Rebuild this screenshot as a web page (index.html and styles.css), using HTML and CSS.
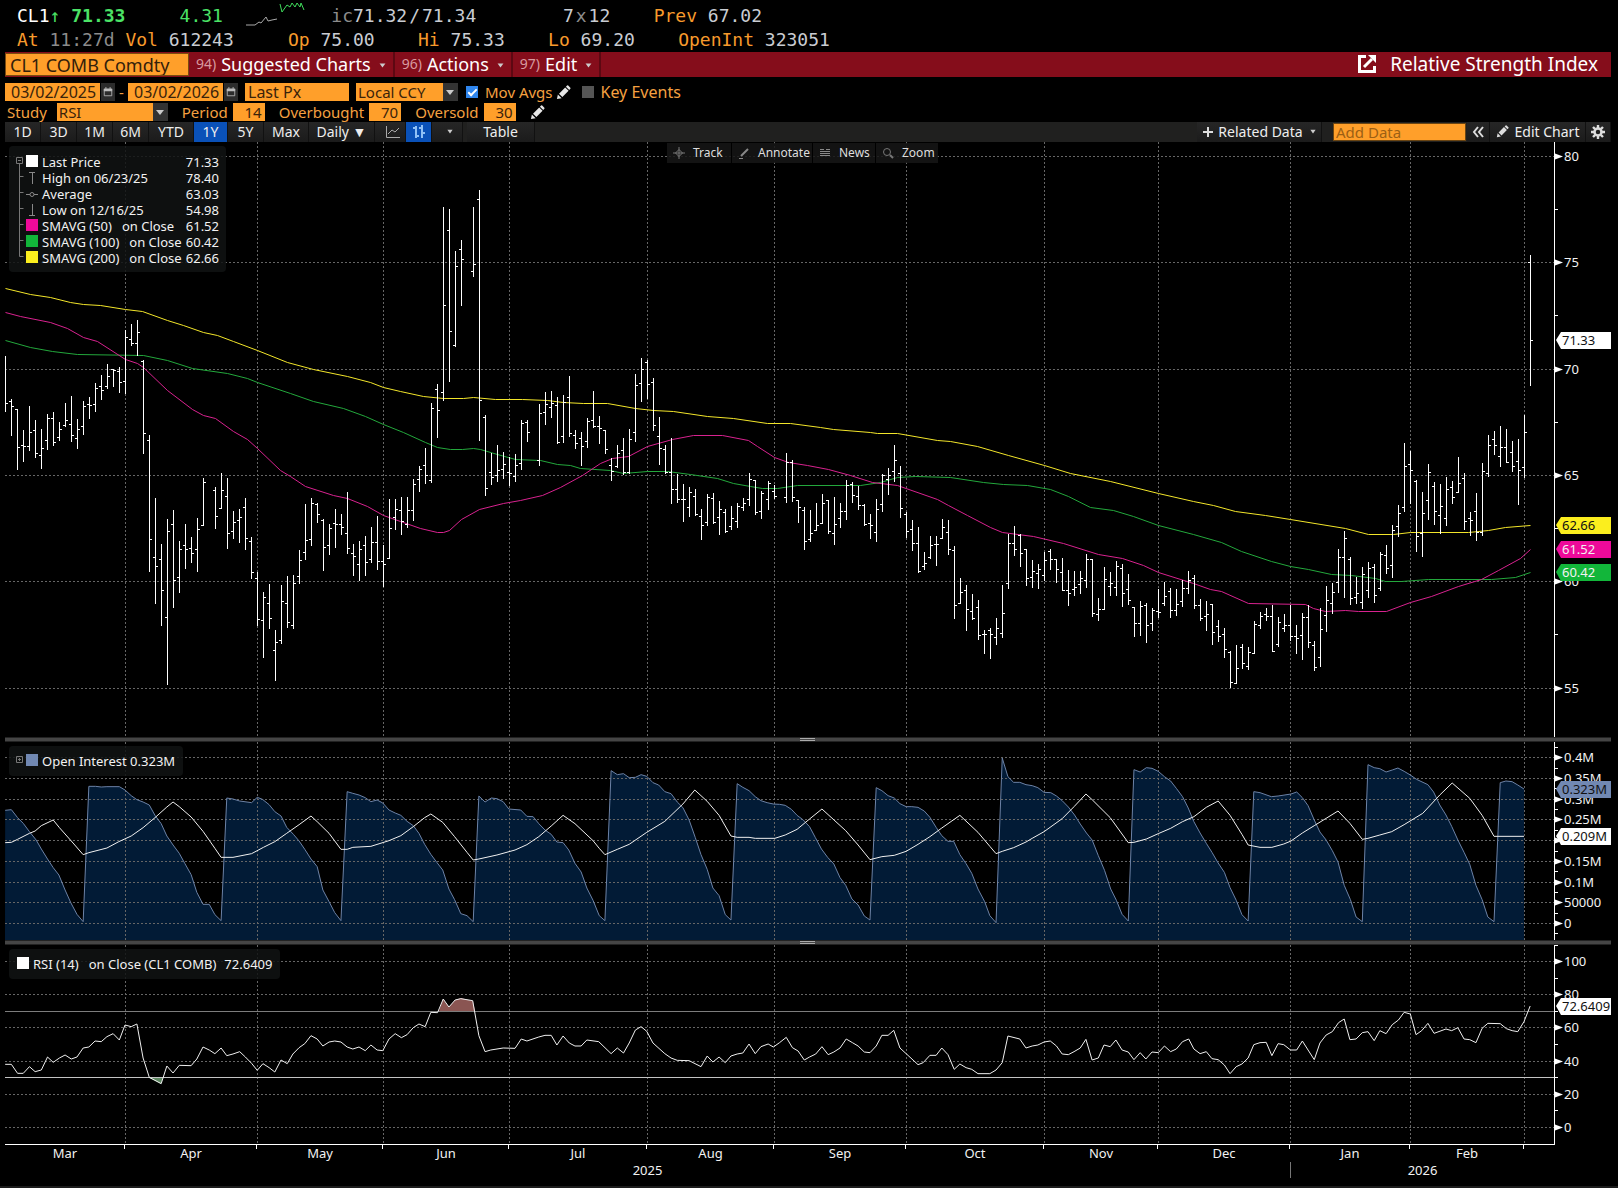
FILE: index.html
```html
<!DOCTYPE html>
<html lang="en">
<head>
<meta charset="utf-8">
<title>CL1 COMB Comdty - Relative Strength Index</title>
<link rel="stylesheet" href="styles.css">
</head>
<body>
<svg class="defs" aria-hidden="true">
  <symbol id="pencil" viewBox="0 0 16 16"><path fill="currentColor" d="M1 15l1-5 4 4zM3.200 9.200l6.600-6.600 3.600 3.600-6.600 6.600zM10.600 1.800l1.200-1.200q.6-.5 1.200 0l2.300 2.300q.5.600 0 1.200l-1.200 1.200z"/></symbol>
  <symbol id="calendar" viewBox="0 0 12 12"><path fill="none" stroke="currentColor" d="M1.500 2.500h9v8h-9z"/><path fill="currentColor" d="M1 2h10v3H1zM3 0h1v3H3zM8 0h1v3H8z"/></symbol>
  <symbol id="caret" viewBox="0 0 8 6"><path fill="currentColor" d="M.5.500h7L4 5.500z"/></symbol>
</svg>

<header class="quote">
  <div class="quote-line"><span class="white">CL1</span><span class="up">↑ <b>71.33</b>     4.31</span>  <svg class="spark" viewBox="0 0 65 28"><path stroke="#aaa" d="M1 25h9l4-3 2 1 5-6 2 4 4-1 5-1"/><path stroke="#3fdc5c" d="M35 4l2 8 5-7 3 2 2-4 3 4 2-4 3 4 1-4 3 7"/></svg>  <span class="dim">ic</span>71.32<span class="slash">/</span>71.34        7<span class="dim slash">x</span>12    <span class="amber">Prev</span> 67.02</div>
  <div class="quote-line"><span class="amber">At</span> <span class="dim">11:27d</span> <span class="amber">Vol</span> 612243     <span class="amber">Op</span> 75.00    <span class="amber">Hi</span> 75.33    <span class="amber">Lo</span> 69.20    <span class="amber">OpenInt</span> 323051</div>
</header>

<nav class="menubar">
  <input class="ticker" type="text" value="CL1 COMB Comdty" aria-label="Security">
  <button class="menu" type="button"><span class="num">94)</span>Suggested Charts<svg class="caret"><use href="#caret"/></svg></button>
  <button class="menu" type="button"><span class="num">96)</span>Actions<svg class="caret"><use href="#caret"/></svg></button>
  <button class="menu" type="button"><span class="num">97)</span>Edit<svg class="caret"><use href="#caret"/></svg></button>
  <h1 class="title"><svg class="popout" viewBox="0 0 18 18"><path fill="none" stroke="#fff" stroke-width="3" d="M8 1.500H1.500v15h15V11M6 12l8-8"/><path fill="#fff" d="M10 0h8v8z"/></svg>Relative Strength Index</h1>
</nav>

<form class="params">
  <div class="param-row">
    <input class="field date" type="text" value="03/02/2025" aria-label="From">
    <button class="icon-btn" type="button" aria-label="Pick start date"><svg><use href="#calendar"/></svg></button>
    <span class="dash">-</span>
    <input class="field date" type="text" value="03/02/2026" aria-label="To">
    <button class="icon-btn" type="button" aria-label="Pick end date"><svg><use href="#calendar"/></svg></button>
    <input class="field price" type="text" value="Last Px" aria-label="Price type">
    <span class="select ccy"><select aria-label="Currency"><option>Local CCY</option></select></span>
    <input id="movavg" class="check" type="checkbox" checked><label class="check-label" for="movavg">Mov Avgs</label>
    <svg class="pencil"><use href="#pencil"/></svg>
    <input id="keyev" class="check gap" type="checkbox"><label class="check-label key" for="keyev">Key Events</label>
  </div>
  <div class="param-row">
    <label class="study-label" for="study">Study</label>
    <span class="select study"><select id="study"><option>RSI</option></select></span>
    <label class="num-label" for="period">Period</label><input id="period" class="field small" type="text" value="14">
    <label class="num-label" for="overb">Overbought</label><input id="overb" class="field small" type="text" value="70">
    <label class="num-label" for="overs">Oversold</label><input id="overs" class="field small" type="text" value="30">
    <svg class="pencil second"><use href="#pencil"/></svg>
  </div>
</form>

<div class="toolbar">
  <div class="ranges">
    <button class="r36" type="button">1D</button><button class="r36" type="button">3D</button><button class="r36" type="button">1M</button><button class="r36" type="button">6M</button><button class="r45" type="button">YTD</button><button class="r34 on" type="button">1Y</button><button class="r36" type="button">5Y</button><button class="r45" type="button">Max</button>
  </div>
  <button class="daily" type="button">Daily ▼</button>
  <button class="line-type" type="button" aria-label="Line chart"><svg viewBox="0 0 16 14"><path fill="none" stroke="#aaa" d="M1.500 1v11.500H15M3 9l4-4 3 2 4-4"/></svg></button>
  <button class="bar-type on" type="button" aria-label="Bar chart"><svg viewBox="0 0 14 16"><path fill="none" stroke="#8fc0f5" stroke-width="2" d="M4 2v12M1 4h3M4 12h3M10 1v13M7 4h3M10 9h3"/></svg></button>
  <button class="more" type="button" aria-label="More chart types"><svg class="caret"><use href="#caret"/></svg></button>
  <button class="table-btn" type="button">Table</button>
  <span class="grow"></span>
  <button class="related" type="button"><svg class="plus" viewBox="0 0 12 12"><path stroke="#ddd" stroke-width="2" d="M6 1v10M1 6h10"/></svg>Related Data<svg class="caret"><use href="#caret"/></svg></button>
  <input class="add-data" type="text" placeholder="Add Data" aria-label="Add Data">
  <button class="collapse" type="button" aria-label="Collapse"><svg viewBox="0 0 12 12"><path fill="none" stroke="#ddd" stroke-width="2" d="M6 1L2 6l4 5M11 1L7 6l4 5"/></svg></button>
  <button class="edit" type="button"><svg class="pencil-s"><use href="#pencil"/></svg>Edit Chart</button>
  <button class="gear" type="button" aria-label="Settings"><svg viewBox="0 0 14 14"><circle cx="7" cy="7" r="3.500" fill="none" stroke="#ddd" stroke-width="2.500"/><path stroke="#ddd" stroke-width="2.400" d="M7 0v3M7 11v3M0 7h3M11 7h3M2 2l2.200 2.200M9.800 9.800L12 12M12 2L9.800 4.200M4.200 9.800L2 12"/></svg></button>
</div>

<main class="chart">
  <section class="panel price-panel">
    <svg class="plot" id="price-plot" viewBox="5 142 1549 595" preserveAspectRatio="none"></svg>
    <svg class="axis" id="price-axis" viewBox="1554 142 57 595"></svg>
    <div class="legend">
      <svg class="tree tall" viewBox="0 0 10 112"><path fill="none" stroke="#777" d="M.5 3.500h6v6h-6zM2 6.500h3M3.500 10v92.500M3.500 22.500h4M3.500 38.500h4M3.500 54.500h4M3.500 70.500h4M3.500 86.500h4M3.500 102.500h4"/></svg>
      <ul class="series">
        <li><i class="swatch white-bg"></i><span>Last Price</span><b>71.33</b></li>
        <li><svg class="mark" viewBox="0 0 12 12"><path stroke="#888" d="M3 .5h6M6.500 0v12"/></svg><span>High on 06/23/25</span><b>78.40</b></li>
        <li><svg class="mark" viewBox="0 0 12 12"><path stroke="#888" d="M0 6.500h12"/><circle cx="6" cy="6.500" r="2" fill="#111" stroke="#888"/></svg><span>Average</span><b>63.03</b></li>
        <li><svg class="mark" viewBox="0 0 12 12"><path stroke="#888" d="M3 11.500h6M6.500 0v12"/></svg><span>Low on 12/16/25</span><b>54.98</b></li>
        <li><i class="swatch pink-bg"></i><span>SMAVG (50)</span><span class="on-close">on Close</span><b>61.52</b></li>
        <li><i class="swatch green-bg"></i><span>SMAVG (100)</span><span class="on-close">on Close</span><b>60.42</b></li>
        <li><i class="swatch yellow-bg"></i><span>SMAVG (200)</span><span class="on-close">on Close</span><b>62.66</b></li>
      </ul>
    </div>
    <div class="tools">
      <button class="t64" type="button"><svg viewBox="0 0 12 12"><path fill="none" stroke="#777" d="M6 0v12M0 6h12M6 2.500L9.500 6 6 9.500 2.500 6z"/></svg>Track</button>
      <button class="t80" type="button"><svg viewBox="0 0 12 12"><path stroke="#888" stroke-width="2" d="M3 9l7-7"/><path stroke="#888" d="M1 11.500h4"/></svg>Annotate</button>
      <button class="t62" type="button"><svg viewBox="0 0 12 12"><path stroke="#888" d="M1 2.500h4M7 2.500h4M1 4.500h10M1 6.500h10M1 8.500h10"/></svg>News</button>
      <button class="t62" type="button"><svg viewBox="0 0 12 12"><circle cx="5" cy="5" r="3.500" fill="none" stroke="#777"/><path stroke="#777" stroke-width="2" d="M8 8l3 3"/></svg>Zoom</button>
    </div>
  </section>
  <div class="splitter"></div>
  <section class="panel oi-panel">
    <svg class="plot" id="oi-plot" viewBox="5 742 1549 198" preserveAspectRatio="none"></svg>
    <svg class="axis" id="oi-axis" viewBox="1554 742 57 198"></svg>
    <div class="legend one">
      <svg class="tree" viewBox="0 0 10 16"><path fill="none" stroke="#777" d="M.5 3.500h6v6h-6zM2 6.500h3M3.500 5v3"/></svg>
      <i class="swatch blue-bg"></i><span>Open Interest 0.323M</span>
    </div>
  </section>
  <div class="splitter"></div>
  <section class="panel rsi-panel">
    <svg class="plot" id="rsi-plot" viewBox="5 945 1549 200" preserveAspectRatio="none"></svg>
    <svg class="axis" id="rsi-axis" viewBox="1554 945 57 200"></svg>
    <div class="legend one">
      <i class="swatch white-bg"></i><span>RSI (14)</span><span class="on-close">on Close (CL1 COMB)</span><span class="reading">72.6409</span>
    </div>
  </section>
  <div class="months">
    <span>Mar</span><span>Apr</span><span>May</span><span>Jun</span><span>Jul</span><span>Aug</span><span>Sep</span><span>Oct</span><span>Nov</span><span>Dec</span><span>Jan</span><span>Feb</span><span></span>
  </div>
  <div class="years"><span>2025</span><span>2026</span></div>
</main>
<footer class="edge"></footer>
<script src="chart.js"></script>
</body>
</html>
```

FILE: styles.css
```css
* { box-sizing: border-box; }
body { margin: 0; background: #000; color: #f2f2f2; font-family: "Noto Sans", "Open Sans", sans-serif; font-size: 13px; line-height: 16px; }
button, input, select { font: inherit; color: inherit; margin: 0; padding: 0; border: 0; border-radius: 0; background: none; }
button { display: flex; align-items: center; justify-content: center; white-space: nowrap; }
svg { display: block; flex: none; }
.defs { position: absolute; width: 0; height: 0; }
.caret { width: 7px; height: 5px; color: #ccc; }

/* quote header */
.quote { height: 52px; padding: 4px 0 0 17px; overflow: hidden; font-family: "DejaVu Sans Mono", monospace; font-size: 18px; line-height: 24px; color: #c9ccd2; }
.quote-line { white-space: pre; height: 24px; }
.white { color: #fff; }
.up { color: #4be366; }
.dim { color: #8c8c8c; }
.amber { color: #f79a2c; }
.slash { margin: 0 2px; }
.spark { display: inline-block; width: 65px; height: 28px; margin-top: -4px; vertical-align: top; fill: none; }

/* red menu bar */
.menubar { display: flex; align-items: stretch; height: 25px; margin: 0 7px 0 5px; background: #850d1b; gap: 1px; }
.ticker { width: 184px; height: 23px; margin-top: 1px; padding-left: 4px; background: #ff9f2a; border: 1px solid #7a4a10; color: #33200a; font-size: 18px; line-height: 22px; }
.menu { padding: 0 7px 2px 6px; border-right: 2px solid #5c0812; color: #fff; font-size: 18px; line-height: 22px; }
.menu .caret { margin: 4px 0 0 8px; }
.num { margin-right: 5px; color: #d89aa0; font-family: "Liberation Sans Narrow", "Noto Sans", sans-serif; font-size: 14px; }
.title { display: flex; align-items: center; gap: 14px; margin: 0 13px 2px auto; font-size: 19px; font-weight: 400; line-height: 22px; color: #fff; }
.popout { width: 18px; height: 18px; }

/* parameters */
.params { display: flex; flex-direction: column; gap: 2px; padding: 6px 7px 1px 5px; color: #f5a040; font-size: 15px; }
.param-row { display: flex; align-items: center; height: 18px; line-height: 18px; }
.field, .select select { height: 18px; background: #ff9f2a; color: #3a230a; line-height: 18px; }
.field { padding: 0 3px; }
.date { width: 95px; padding-left: 6px; font-size: 16px; }
.icon-btn { width: 14px; height: 18px; margin-left: 1px; background: #2c2c2c; color: #bbb; }
.icon-btn svg { width: 10px; height: 12px; }
.dash { width: 13px; text-align: center; }
.price { width: 104px; margin-left: 7px; font-size: 16px; }
.select { position: relative; display: flex; margin-left: 7px; }
.select select { appearance: none; width: 102px; border-right: 15px solid #333; padding-left: 2px; }
.select::after { content: ""; position: absolute; right: 4px; top: 7px; border: 4px solid transparent; border-top: 5px solid #ccc; border-bottom: 0; pointer-events: none; }
.select.study { margin-left: 10px; }
.select.study select { width: 111px; }
.check { appearance: none; width: 12px; height: 12px; margin-left: 8px; background: #555; }
.check:checked { background: #2f86ee; }
.check:checked::after { content: ""; display: block; width: 7px; height: 3px; margin: 3px 0 0 2px; border: solid #fff; border-width: 0 0 2px 2px; rotate: -45deg; }
.gap { margin-left: 11px; }
.check-label { margin-left: 7px; }
.key { font-size: 16px; }
.pencil { width: 15px; height: 15px; margin-left: 3px; color: #e6e6e6; }
.second { margin-left: 14px; }
.study-label { margin-left: 2px; }
.num-label { margin-left: 14px; }
.small { width: 32px; margin-left: 5px; text-align: right; }

/* toolbar */
.toolbar { display: flex; height: 20px; margin: 0 7px 0 5px; background: #20201f; font-size: 14px; line-height: 18px; color: #eee; }
.toolbar button { border-right: 1px solid #111; padding-bottom: 1px; background: linear-gradient(#262626, #1b1b1b); }
.toolbar .on { background: #0a51b8; }
.ranges { display: flex; }
.r34 { width: 34px; }
.r36 { width: 36px; }
.r45 { width: 45px; }
.daily { width: 66px; }
.line-type { width: 31px; }
.line-type svg { width: 16px; height: 14px; margin-left: 6px; }
.bar-type { width: 26px; }
.bar-type svg { width: 14px; height: 16px; }
.more { width: 31px; margin-right: 4px; padding-left: 6px; }
.more .caret, .related .caret { width: 6px; height: 5px; }
.table-btn { width: 68px; }
.grow { flex: 1; }
.related { width: 125px; }
.plus { width: 12px; height: 12px; margin-right: 4px; }
.related .caret { margin-left: 7px; }
.add-data { width: 133px; height: 18px; margin: 1px 1px 0 11px; padding-left: 2px; background: #ff9f2a; border: 1px solid #6b4512; color: #33200a; font-size: 15px; }
.add-data::placeholder { color: #9c5f14; opacity: 1; }
.collapse { width: 23px; }
.collapse svg { width: 12px; height: 12px; }
.edit { width: 96px; }
.pencil-s { width: 13px; height: 13px; margin-right: 6px; color: #ddd; }
.gear { width: 25px; }
.gear svg { width: 14px; height: 14px; }

/* chart panels */
.chart { margin: 0 7px 0 5px; }
.panel { position: relative; display: grid; grid-template-columns: 1fr 57px; }
.plot { width: 100%; height: 100%; overflow: hidden; }
.axis { width: 57px; height: 100%; overflow: visible; }
.price-panel { height: 595px; }
.oi-panel { height: 198px; }
.rsi-panel { height: 200px; }
.plot path { fill: none; stroke-width: 1; }
.grid { stroke: #666; stroke-dasharray: 2 2; shape-rendering: crispEdges; }
.bars { stroke: #fff; shape-rendering: crispEdges; }
.sma200 { stroke: #f3e62a; }
.sma100 { stroke: #23a83c; }
.sma50 { stroke: #d8228f; }
.plot .area { fill: #021b36; stroke: none; }
.area-line { stroke: #6c82a6; }
.white-line { stroke: #f0f0f0; }
.plot .hot { fill: #8a5552; stroke: none; }
.plot .cold { fill: #5c8560; stroke: none; }
.band-top { stroke: #7c7c7c; shape-rendering: crispEdges; }
.band-low { stroke: #c4c4c4; shape-rendering: crispEdges; }
.axis-line { stroke: #fff; shape-rendering: crispEdges; }
.axis text { fill: #f2f2f2; font-size: 13px; }
.axis .dark { fill: #111; }
.splitter { height: 5px; background: linear-gradient(90deg, transparent calc(50% - 8px), #aaa 0, #aaa calc(50% + 7px), transparent 0) 0 0 / 100% 1px no-repeat, linear-gradient(90deg, transparent calc(50% - 8px), #aaa 0, #aaa calc(50% + 7px), transparent 0) 0 2px / 100% 1px no-repeat, #454545; border: solid #222; border-width: 1px 0; }

.legend { position: absolute; left: 4px; top: 4px; display: flex; padding: 8px 7px 6px; border-radius: 4px; background: rgba(17, 19, 19, .85); white-space: nowrap; }
.tree { width: 10px; height: 16px; }
.tall { height: 112px; }
.series { width: 193px; margin: 0; padding: 0; list-style: none; }
.series li { display: flex; height: 16px; }
.series b { margin-left: auto; font-weight: 400; }
.on-close { margin-left: 10px; }
.reading { margin-left: 8px; }
.swatch { width: 12px; height: 12px; margin: 1px 4px 0 0; }
.mark { width: 12px; height: 12px; margin: 2px 4px 0 0; }
.one { padding: 7px 8px; }
.oi-panel .legend { padding-left: 7px; }
.white-bg { background: #fff; }
.pink-bg { background: #ee0a9a; }
.green-bg { background: #12b63a; }
.yellow-bg { background: #fbee1e; }
.blue-bg { background: #7188b2; }

.tools { position: absolute; left: 50%; top: 1px; margin-left: -141px; display: flex; gap: 1px; }
.tools button { justify-content: flex-start; height: 20px; padding-left: 6px; background: rgba(22, 22, 22, .85); color: #ddd; font-size: 12px; }
.tools svg { width: 12px; height: 12px; margin-right: 8px; }
.t64 { width: 64px; }
.t80 { width: 80px; }
.t62 { width: 62px; }

.months { display: grid; grid-template-columns: 120fr 132fr 126fr 126fr 138fr 127fr 132fr 138fr 114fr 132fr 120fr 114fr 30fr; height: 17px; margin-right: 57px; }
.months span { text-align: center; background: linear-gradient(#fff, #fff) right top / 1px 4px no-repeat; }
.months span:last-child { background: none; }
.years { display: grid; grid-template-columns: 1285fr 264fr; height: 24px; margin-right: 57px; text-align: center; }
.years span { height: 16px; }
.years span + span { border-left: 1px solid #777; }
.edge { height: 2px; background: #1c1c1c; }
```

FILE: chart.js
```js
const NS = 'http://www.w3.org/2000/svg';
const LEFT = 5, RIGHT = 1554;

function add(id, tag, attrs, text) {
  const el = document.createElementNS(NS, tag);
  for (const k in attrs) el.setAttribute(k, attrs[k]);
  if (text !== undefined) el.textContent = text;
  document.getElementById(id).appendChild(el);
}
const path = (id, cls, d) => add(id, 'path', { class: cls, d });
const nums = s => s.trim().split(/\s+/).map(p => p.split(',').map(Number));
const barX = i => LEFT + 6 * i + (i > 126 ? 1 : 0) + 0.5;

/* Sessions: high, low, open, close in thirds of a unit below the block's base; "-" is a holiday. */
const sessions = [
  { base: 340, first: 0, data: `
48,218,190,190 177,290,184,199 208,390,208,322 270,366,316,319 198,333,319,277 240,354,271,340 267,387,347,325
222,330,301,235 216,318,235,306 246,303,292,268 189,261,257,241 168,306,253,286 237,327,295,268 183,286,259,199
171,237,193,196 129,216,193,145 105,180,138,151 72,147,139,109 87,141,88,91 81,159,94,127 -30,162,124,-8
-48,20,-2,10 -60,48,10,-23 60,342,64,280 285,696,301,598 474,792,652,679 612,858,658,751 537,1035,832,574
510,804,553,721 603,759,712,628 552,687,616,628 591,669,625,640 534,696,628,568 414,558,556,427 -
441,567,451,529 399,507,505,451 414,627,469,580 513,597,574,547 507,609,541,532 474,630,502,595 591,717,604,697
696,858,715,838 756,954,841,772 732,867,790,835 870,1023,931,907 735,912,901,784 708,864,790,847 705,867,856,730
630,732,709,661 492,660,637,601 474,618,598,490 489,549,492,523 537,693,541,622 552,645,616,565 507,624,550,553
522,585,553,562 456,642,580,625 612,708,640,649 603,723,673,628 588,708,616,667 561,669,658,607 528,690,607,664
615,741,664,673 477,657,655,565 477,570,532,508 471,585,511,544 471,564,553,511 417,543,511,433 378,456,418,388
324,432,376,406 189,429,421,205 132,294,148,211 -399,183,157,-104 -393,126,-329,-26 -267,21,16,-221
-300,-102,-272,-242 - -399,-189,-206,-227 -450,303,-422,181 225,468,232,445 339,435,397,411 315,427,406,391
336,417,388,373 351,438,397,400 342,427,409,376 240,390,370,250 240,306,247,277 - 192,378,361,220 156,255,217,192
153,234,202,190 171,312,196,307 165,309,289,187 108,291,172,280 270,327,286,310 276,378,295,319 234,324,304,244
153,264,241,259 228,312,259,265 270,342,271,328 354,423,376,393 315,384,379,340 294,405,331,397 267,402,397,298
102,306,277,136 54,186,130,88 60,177,67,133 114,273,127,256 231,375,289,325 315,402,328,397 294,492,397,448
402,489,448,478 432,546,478,478 441,531,502,457 447,528,469,523 507,600,529,556 462,558,547,472 459,552,475,547
483,585,532,508 507,579,517,574 498,570,559,535 489,564,544,499 474,513,502,490 399,498,478,418 420,525,421,517
453,537,514,460 423,510,478,430 435,477,454,469 - 339,489,472,367 360,487,367,472 480,549,481,502
501,630,511,604 510,606,598,580` },
  { base: 400, first: 135, data: `
309,393,391,376 282,372,370,310 300,402,301,394 291,435,400,373 309,384,355,334 240,360,334,256 246,309,253,286
258,330,289,316 312,378,316,373 342,417,370,376 297,427,397,328 222,336,313,226 204,285,238,226 135,246,214,181
198,354,220,325 336,414,343,394 360,453,388,430 381,519,430,514 456,510,499,490 408,477,472,436 408,498,433,433
357,417,415,382 360,465,397,448 438,657,451,616 534,612,610,577 555,693,571,628 582,660,634,655 600,720,622,706
690,762,703,703 684,777,691,703 654,735,712,685 555,714,700,640 402,567,550,430 378,468,430,448 402,501,406,460
447,558,448,535 480,564,532,514 492,567,520,508 456,543,526,481 447,510,454,478 477,549,478,508 474,573,517,571
510,618,571,580 513,588,568,562 513,582,553,535 462,564,541,478 477,651,478,640 594,663,643,628 501,630,628,538
516,588,559,550 483,588,562,499 492,621,505,580 522,615,568,601 621,711,622,670 603,708,670,619 609,729,616,676
624,693,670,631 567,655,634,637 546,618,610,589 564,654,574,631 567,648,631,613 540,621,604,565 513,582,565,541
525,627,535,616 597,663,616,655 603,693,649,643 612,735,613,697 660,726,679,709` },
  { base: 240, first: 203, data: `
1164,1254,1183,1228 1233,1344,1237,1327 1215,1332,1330,1285 1212,1287,1222,1270 1221,1290,1279,1237
1143,1242,1240,1153 1116,1167,1156,1129 1104,1143,1123,1129 1095,1236,1129,1234 1131,1221,1213,1147
1122,1176,1165,1156 1095,1203,1156,1189 1155,1242,1189,1195 1119,1260,1186,1132 1095,1224,1132,1207
1203,1293,1216,1282 1104,1281,1252,1168 1038,1176,1126,1081 1029,1122,1090,1057 927,1059,1027,952
873,1074,952,895 951,1095,958,1075 1011,1092,1072,1060 981,1107,1087,1003 966,1074,1051,985 972,1089,982,1066
936,1053,1045,943 915,1002,946,985 855,1014,976,871 795,891,859,820 609,816,802,679 633,792,673,691
720,936,724,889 756,951,880,820 672,840,781,697 726,855,739,814 732,882,826,799 711,858,835,748 723,792,742,772
651,759,757,730 699,870,715,844 816,888,835,841 759,903,814,877 669,888,877,694 585,711,700,616 573,645,598,616
558,681,649,622 567,669,622,667 603,696,637,679 597,795,664,691 525,714,682,577 45,438,67,301` }
];

const sma200 = '5,288 30,294 50,297 70,302 83,304 100,305 125,309 142,311 167,320 183,325 203,332 217,335 233,341 257,350 287,362 313,369 347,376 370,382 383,387 400,391 423,396 443,398 463,398 473,397 495,399 522,399 547,400 563,402 583,403 607,403 635,408 653,410 673,411 707,416 733,418 767,423 790,423 820,427 833,429 870,432 877,433 897,433 937,440 950,441 977,446 1008,455 1044,465 1070,473 1110,481 1158,493 1193,501 1213,505 1235,511 1265,515 1290,519 1345,528 1368,534 1393,534 1410,532 1468,532 1488,530 1505,527 1530,525';
const sma50 = '5,312 20,316 50,322 67,328 83,337 97,341 125,359 137,363 143,367 167,390 192,409 203,415 215,418 233,431 247,439 257,448 280,470 290,476 305,486 333,495 347,498 367,506 383,515 400,521 420,528 437,532 443,532 449,530 461,519 479,509 503,503 520,500 542,495 560,487 582,475 600,463 612,458 628,456 647,446 672,439 693,435 722,435 748,440 757,446 774,457 788,462 807,465 828,469 850,475 872,482 897,485 937,499 948,505 967,515 990,527 1002,532 1033,536 1063,543 1098,554 1122,558 1143,565 1158,572 1193,583 1210,589 1221,591 1248,603 1305,604 1313,608 1325,611 1345,610 1358,611 1386,611 1410,602 1431,596 1458,586 1481,579 1498,570 1520,558 1530,549';
const sma100 = '5,340 30,347 52,351 77,354 143,355 167,360 192,368 227,373 247,378 257,382 290,393 313,401 343,408 365,416 383,424 403,432 425,442 437,447 450,449 462,449 473,448 480,449 497,454 515,459 540,460 557,464 570,465 580,468 610,470 623,473 647,471 667,471 690,474 717,478 733,483 750,486 762,488 777,488 797,485 860,485 880,482 897,477 915,476 950,477 983,482 1003,484 1027,485 1050,489 1068,496 1090,507 1113,510 1133,516 1158,525 1193,534 1221,542 1241,551 1271,561 1290,566 1308,569 1331,574 1351,575 1375,578 1385,581 1401,581 1428,579 1491,579 1515,577 1530,572';

/* Lower studies come in two halves; each half has its own x origin. */
const half = (s, x0) => nums(s).map(([x, y]) => [x0 + x * 810 / 1568, 730 + y / 3]);
const openInterest = [
  ...half('10,241 22,239 34,263 45,280 57,305 70,330 80,357 92,387 103,413 114,435 126,480 137,518 149,553 161,575 172,169 185,169 196,171 207,170 231,170 242,180 254,197 265,209 277,216 289,225 300,256 312,281 323,318 335,345 347,370 358,401 370,434 381,487 393,523 405,523 416,554 428,572 439,204 451,207 464,213 487,218 498,202 508,208 521,224 532,245 544,258 555,292 568,313 579,333 590,358 602,387 614,410 625,480 637,515 648,548 660,572 672,185 683,190 695,195 707,203 718,215 730,210 741,219 753,240 765,249 776,256 788,274 800,287 811,310 822,343 834,373 846,398 857,420 869,477 880,509 892,551 904,557 916,575 927,198 939,216 951,204 962,206 974,215 985,237 1008,240 1020,259 1032,260 1043,281 1055,300 1067,313 1078,336 1090,338 1101,360 1113,400 1125,426 1136,474 1148,511 1160,557 1171,572 1183,122 1195,134 1207,131 1218,143 1230,142 1241,134 1252,139 1264,158 1275,165 1287,185 1299,191 1311,216 1322,233 1334,270 1346,323 1357,374 1369,418 1380,474 1392,497 1404,554 1415,570 1427,161 1438,172 1450,182 1462,200 1473,212 1485,218 1497,222 1509,223 1520,226 1532,238 1543,256 1555,270', 0),
  ...half('3,290 14,322 26,357 38,382 50,402 62,443 73,466 85,507 97,525 109,558 120,570 132,173 143,182 155,197 167,204 178,221 190,230 201,230 213,232 225,243 236,262 248,292 259,317 271,334 282,334 294,374 306,401 317,430 329,477 342,515 352,557 364,578 376,84 387,140 398,157 410,157 422,164 434,167 445,173 457,187 470,188 481,198 492,212 504,231 516,255 527,282 539,309 550,330 562,377 574,421 586,477 597,511 608,553 620,573 631,119 643,126 655,113 666,115 678,124 690,140 702,153 713,175 725,200 736,234 747,275 759,309 771,340 782,367 794,399 806,427 817,473 829,511 840,554 852,573 863,185 875,188 897,200 910,198 935,192 946,186 957,203 968,227 980,270 991,306 1003,330 1015,362 1026,396 1038,466 1050,509 1061,561 1073,575 1084,104 1096,113 1107,116 1119,126 1131,120 1142,114 1154,124 1166,135 1178,148 1200,164 1211,186 1223,225 1235,255 1246,289 1258,330 1270,367 1281,403 1293,466 1305,509 1316,561 1328,575 1340,158 1351,153 1363,155 1374,165 1386,177', 808)
];
const oiAverage = [
  ...half('10,338 22,337 34,328 57,310 68,303 80,287 103,270 115,293 138,333 161,374 172,368 207,354 230,335 254,318 277,293 300,263 323,231 335,216 347,230 370,261 393,304 416,355 428,382 451,382 487,371 510,352 532,335 555,310 579,284 602,258 614,275 637,310 660,358 672,358 683,352 718,349 753,332 776,317 800,290 822,263 834,252 857,277 880,320 904,367 916,390 927,387 962,375 997,360 1020,344 1043,320 1067,288 1090,256 1113,281 1148,332 1160,355 1171,374 1195,358 1218,343 1252,307 1287,274 1322,222 1345,180 1369,214 1392,256 1415,318 1427,322 1450,322 1462,325 1500,325 1520,315 1543,298', 0),
  ...half('3,267 27,237 73,302 97,345 120,389 143,380 167,376 190,364 213,343 236,320 259,294 294,256 329,307 352,349 364,371 376,364 398,353 422,336 434,325 457,305 492,266 515,230 538,192 550,209 585,263 620,338 631,337 655,327 678,311 702,295 725,275 747,260 771,232 794,213 817,256 840,313 852,345 875,352 898,352 921,342 935,333 957,309 980,287 1003,265 1026,243 1049,280 1073,328 1084,325 1107,315 1130,305 1154,284 1190,250 1223,195 1247,159 1281,205 1305,256 1328,319 1386,319', 808)
];
const rsi = [
  ...half('10,1003 22,1003 34,1030 45,1030 57,1010 68,1025 80,1020 92,981 103,997 115,984 126,975 138,987 149,981 161,954 172,951 184,933 196,935 207,920 219,911 231,930 242,885 254,890 265,882 277,984 289,1042 300,1051 312,1061 323,1008 335,1029 347,1006 370,1007 381,987 393,951 405,960 416,971 428,954 439,977 451,972 464,965 475,981 487,1000 498,1021 509,1001 521,1013 532,1026 544,990 556,1001 567,972 579,953 590,941 602,917 614,927 625,948 637,936 648,933 660,936 672,951 683,957 695,951 707,962 718,945 730,960 741,962 753,927 765,911 777,923 788,914 800,893 811,882 823,890 834,847 847,848 858,807 869,831 881,810 892,806 915,812 927,917 939,965 950,960 974,954 997,955 1009,927 1020,933 1043,921 1055,916 1067,916 1078,945 1090,918 1102,939 1113,948 1125,948 1136,930 1159,935 1183,971 1195,954 1207,969 1218,939 1230,900 1241,890 1252,904 1264,939 1287,971 1299,984 1311,991 1334,992 1357,1010 1369,978 1380,996 1392,981 1404,998 1415,978 1427,972 1438,969 1450,942 1462,971 1473,950 1487,942 1497,951 1509,938 1522,922 1534,953 1545,963 1557,990', 0),
  ...half('3,981 15,972 27,950 39,974 50,966 62,954 74,927 86,938 97,948 109,966 120,968 132,948 143,916 155,916 166,901 178,954 190,971 213,1004 223,998 236,976 248,976 259,954 271,974 283,1018 294,1002 306,1013 317,1018 329,1031 352,1031 364,1020 376,998 387,918 410,927 422,954 434,948 445,945 457,936 469,933 481,948 492,972 504,974 515,965 527,954 538,928 550,990 562,984 573,945 585,950 596,930 608,960 620,966 631,989 643,968 654,987 666,966 678,968 690,948 702,965 713,957 725,935 737,927 747,957 759,971 771,965 782,986 794,989 806,1005 817,1031 829,1010 840,1002 852,984 863,944 875,938 887,937 898,977 910,941 921,944 934,960 946,960 957,933 968,960 980,989 991,939 1003,915 1015,905 1027,878 1038,867 1049,929 1061,927 1073,908 1084,905 1096,932 1107,902 1119,911 1131,884 1143,870 1154,847 1166,852 1177,914 1188,902 1200,880 1212,910 1235,897 1246,902 1258,893 1270,927 1281,929 1293,938 1305,895 1316,880 1340,881 1352,896 1363,902 1374,905 1386,875 1398,828', 808)
];

const line = pts => 'M' + pts.map(p => p.join(' ')).join('L');
const shifted = s => line(nums(s).map(([x, y]) => [x + 0.5, y + 0.5]));

const monthStarts = [20, 42, 63, 84, 107, 128, 150, 173, 192, 214, 234, 253];
const panels = [
  { id: 'price', top: 142, bottom: 737, rows: [[156, '80'], [262, '75'], [369, '70'], [475, '65'], [581, '60'], [688, '55']], minor: [209, 315, 422, 528, 634] },
  { id: 'oi', top: 742, bottom: 940, rows: [[757, '0.4M'], [778, '0.35M'], [799, '0.3M'], [819, '0.25M'], [840, ''], [861, '0.15M'], [882, '0.1M'], [902, '50000'], [923, '0']], minor: [747, 768, 788, 809, 830, 851, 871, 892, 913, 933] },
  { id: 'rsi', top: 945, bottom: 1144, rows: [[961, '100'], [994, '80'], [1027, '60'], [1061, '40'], [1094, '20'], [1127, '0']], minor: [945, 978, 1011, 1044, 1077, 1110] }
];

function drawGrid(p) {
  p.rows.forEach(([y]) => path(p.id + '-plot', 'grid', `M${LEFT} ${y + 0.5}H${RIGHT}`));
  monthStarts.forEach(i => path(p.id + '-plot', 'grid', `M${barX(i)} ${p.top}V${p.bottom}`));
}

path('oi-plot', 'area', line(openInterest) + 'V940H5Z');
panels.forEach(drawGrid);

let bars = '';
sessions.forEach(({ base, first, data }) => data.trim().split(/\s+/).forEach((row, n) => {
  if (row === '-') return;
  const [h, l, o, c] = row.split(',').map(v => base + Math.floor(v / 3));
  const x = barX(first + n);
  bars += `M${x} ${h}V${l}M${x - 2.5} ${o + 0.5}H${x}M${x} ${c + 0.5}H${x + 2.5}`;
}));
path('price-plot', 'sma200', shifted(sma200));
path('price-plot', 'sma100', shifted(sma100));
path('price-plot', 'sma50', shifted(sma50));
path('price-plot', 'bars', bars);

path('oi-plot', 'area-line', line(openInterest));
path('oi-plot', 'white-line', line(oiAverage));

path('rsi-plot', 'band-top', 'M5 1011.5H1554');
path('rsi-plot', 'band-low', 'M5 1077.5H1554');
path('rsi-plot', 'hot', 'M439 1011L443 999 449 1007 455 1000 461 998 473 1001 475 1011Z');
path('rsi-plot', 'cold', 'M149 1078L155 1081 161 1084 163 1078Z');
path('rsi-plot', 'white-line', line(rsi));
path('rsi-plot', 'axis-line', 'M5 1144.5H1554');

panels.forEach(p => {
  const id = p.id + '-axis';
  add(id, 'path', { class: 'axis-line', fill: 'none', d: `M1554.5 ${p.top}V${p.bottom + (p.id === 'rsi' ? 1 : 0)}` + p.minor.map(y => `M1555 ${y + 0.5}h3`).join('') });
  p.rows.forEach(([y, label]) => {
    add(id, 'path', { fill: '#fff', d: `M1555 ${y - 2.5}l8 3-8 3z` });
    if (label) add(id, 'text', { x: 1564, y: y + 5 }, label);
  });
});

[['price', 572, '60.42', '#12b63a', ''], ['price', 549, '61.52', '#ee0a9a', ''], ['price', 525, '62.66', '#fbee1e', 'dark'], ['price', 340, '71.33', '#fff', 'dark'],
 ['oi', 789, '0.323M', '#7188b2', 'dark'], ['oi', 836, '0.209M', '#fff', 'dark'], ['rsi', 1006, '72.6409', '#fff', 'dark']].forEach(([p, y, label, fill, cls]) => {
  add(p + '-axis', 'path', { fill, d: `M1556 ${y}L1561 ${y - 8}H1611V${y + 9}H1561Z` });
  add(p + '-axis', 'text', { class: cls, x: 1562, y: y + 5 }, label);
});
```
